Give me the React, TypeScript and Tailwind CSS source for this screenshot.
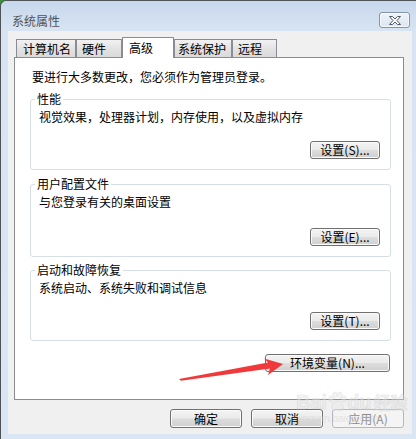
import React from "react";

const btnBase =
  "flex items-center justify-center h-[18px] rounded-[3px] border border-[#707070] bg-[linear-gradient(#f3f3f3_0%,#ebebeb_48%,#dddddd_52%,#cfcfcf_100%)] shadow-[inset_0_0_0_1px_#fbfbfb] text-[12px] leading-[14px] text-black";

function GroupBox({
  title,
  desc,
  btn,
  className,
}: {
  title: string;
  desc: string;
  btn: string;
  className: string;
}) {
  return (
    <div
      className={
        "relative flex flex-col rounded-[3px] border border-[#d5dfe5] pl-[8px] pr-[10px] pt-[10px] pb-[10px] " +
        className
      }
    >
      <span className="absolute left-[4px] top-[-8px] bg-white px-[2px] text-[12px] leading-[14px] text-black">
        {title}
      </span>
      <div className="text-[12px] leading-[14px] text-black">{desc}</div>
      <div className={btnBase + " mt-auto self-end w-[70px]"}>{btn}</div>
    </div>
  );
}

function Tab({
  label,
  className,
}: {
  label: string;
  className: string;
}) {
  return (
    <div
      className={
        "flex items-center h-[18px] border border-b-0 border-[#898c95] bg-[linear-gradient(#f2f2f2,#e3e3e3_50%,#dadada)] text-[12px] leading-[14px] text-black " +
        className
      }
    >
      {label}
    </div>
  );
}

export default function App() {
  return (
    <div className="relative w-[416px] h-[439px] overflow-hidden bg-[#3f8f3f] [font-family:'Noto_Sans_CJK_SC','Noto_Sans',sans-serif]">
      <div className="flex flex-col w-[416px] h-[439px] rounded-tl-[6px] border-t border-l border-[#4e5358] bg-[linear-gradient(#c8d8ec_0px,#d8e4f2_30px,#dae6f3_100%)] pl-[7px] pr-[4px] pb-[5px]">
        {/* title bar */}
        <div className="flex items-start justify-between h-[30px] shrink-0">
          <div className="pl-[4px] pt-[12px] text-[12px] leading-[16px] text-[#4f535a]">
            系统属性
          </div>
          <div className="mt-[11px] mr-[2px] flex items-center justify-center w-[31px] h-[16px] rounded-[3px] border border-[#8595a8] bg-[linear-gradient(#eef3f9,#dbe5f1)] shadow-[inset_0_0_0_1px_#f6f9fc]">
            <svg width="14" height="9" viewBox="0 0 14 9">
              <path
                d="M1.5 0.5 H4.5 L7 3 L9.5 0.5 H12.5 L9 4.5 L12.5 8.5 H9.5 L7 6 L4.5 8.5 H1.5 L5 4.5 Z"
                fill="#ffffff"
                stroke="#525a66"
                strokeWidth="1"
                strokeLinejoin="round"
              />
            </svg>
          </div>
        </div>

        {/* client area */}
        <div className="flex flex-col flex-1 bg-[#f0f0f0] pt-[6px]">
          {/* tabs */}
          <div className="flex items-end h-[20px] ml-[8px]">
            <Tab label="计算机名" className="w-[60px] pl-[6px]" />
            <Tab label="硬件" className="w-[46px] pl-[5px]" />
            <div className="relative z-10 flex items-start h-[21px] w-[52px] -mb-px border border-b-0 border-[#898c95] bg-white pl-[6px] pt-[3px] text-[12px] leading-[14px] text-black">
              高级
            </div>
            <Tab label="系统保护" className="w-[58px] pl-[3px]" />
            <Tab label="远程" className="w-[45px] pl-[5px]" />
          </div>

          {/* panel */}
          <div className="flex flex-col ml-[6px] w-[390px] h-[343px] border border-[#898c95] bg-white pl-[15px] pr-[12px] pt-[12px]">
            <div className="pl-[2px] text-[12px] leading-[14px] text-black">
              要进行大多数更改，您必须作为管理员登录。
            </div>
            <GroupBox
              title="性能"
              desc="视觉效果，处理器计划，内存使用，以及虚拟内存"
              btn="设置(S)..."
              className="mt-[15px] h-[71px]"
            />
            <GroupBox
              title="用户配置文件"
              desc="与您登录有关的桌面设置"
              btn="设置(E)..."
              className="mt-[14px] h-[73px]"
            />
            <GroupBox
              title="启动和故障恢复"
              desc="系统启动、系统失败和调试信息"
              btn="设置(T)..."
              className="mt-[13px] h-[71px]"
            />
            <div className={btnBase + " mt-[13px] self-end mr-[1px] w-[125px]"}>
              环境变量(N)...
            </div>
          </div>

          {/* bottom buttons */}
          <div className="flex justify-end gap-[9px] mt-[9px] pr-[8px]">
            <div className={btnBase + " w-[72px] h-[19px]"}>确定</div>
            <div className={btnBase + " w-[72px] h-[19px]"}>取消</div>
            <div className="flex items-center justify-center w-[72px] h-[19px] rounded-[3px] border border-[#b5b9bd] bg-[#f4f4f4] text-[12px] leading-[14px] text-[#8d8d8d]">
              应用(A)
            </div>
          </div>
        </div>
      </div>

      {/* watermark */}
      <div className="pointer-events-none absolute left-[296px] top-[391px] flex flex-col items-start opacity-45">
        <div className="flex items-center text-[20px] leading-[22px] font-bold text-[#e6e6e6] [font-family:'Liberation_Sans',sans-serif] [-webkit-text-stroke:0.6px_#c8c8c8]">
          <span>Bai</span>
          <svg width="20" height="22" viewBox="0 0 20 22">
            <g fill="#e8e8e8" stroke="#c8c8c8" strokeWidth="0.8">
              <ellipse cx="4" cy="8" rx="2.2" ry="3" />
              <ellipse cx="8" cy="4" rx="2.2" ry="3" />
              <ellipse cx="13" cy="4" rx="2.2" ry="3" />
              <ellipse cx="17" cy="8" rx="2.2" ry="3" />
              <path d="M10.5 10 C6 10 4 16 5 18 C6 20 9 19 10.5 19 C12 19 15 20 16 18 C17 16 15 10 10.5 10 Z" />
            </g>
          </svg>
          <span>du</span>
          <span className="ml-[2px] text-[17px] [font-family:'Noto_Sans_CJK_SC',sans-serif]">经验</span>
        </div>
        <div className="ml-[2px] text-[10px] leading-[12px] text-[#cfcfcf] [font-family:'Liberation_Sans',sans-serif]">
          jingyan.baidu.com
        </div>
      </div>

      {/* red arrow */}
      <svg
        className="pointer-events-none absolute left-0 top-0"
        width="416"
        height="439"
        viewBox="0 0 416 439"
      >
        <polygon
          points="179,379 268,362.5 264,358.5 283,364 268,375 270,368.5 181,380.8"
          fill="#f0393b"
        />
      </svg>
    </div>
  );
}
